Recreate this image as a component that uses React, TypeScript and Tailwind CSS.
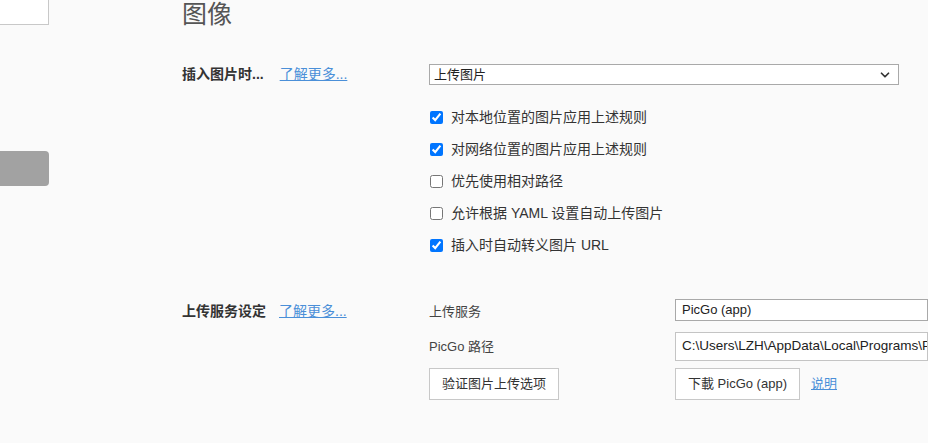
import { ChevronDown } from "lucide-react";

const rules = [
  { label: "对本地位置的图片应用上述规则", checked: true },
  { label: "对网络位置的图片应用上述规则", checked: true },
  { label: "优先使用相对路径", checked: false },
  { label: "允许根据 YAML 设置自动上传图片", checked: false },
  { label: "插入时自动转义图片 URL", checked: true },
];

const font = "font-['Liberation_Sans','Noto_Sans_CJK_SC',sans-serif]";

export default function App() {
  return (
    <div className={`w-[928px] h-[443px] overflow-hidden bg-[#fafafa] text-[#333] flex ${font}`}>
      {/* Sidebar remnants */}
      <div className="w-[49px] shrink-0 flex flex-col">
        <div className="h-[25px] border-r border-b border-[#c8c8c8] bg-white" />
        <div className="mt-[126px] h-[35px] rounded-r-[4px] bg-[#a2a2a2]" />
      </div>

      <div className="ml-[133px] flex-1 min-w-0">
        <h1 className="text-[25px] leading-[24px] text-[#555] font-['Noto_Sans_CJK_SC',sans-serif]">图像</h1>

        {/* Insert image section */}
        <div className="mt-[40px] flex">
          <div className="w-[247px] shrink-0 h-[21px] flex items-center text-[14px]">
            <span className="font-bold text-[#333]">插入图片时...</span>
            <a className="ml-[16px] text-[#4a8fd8] underline">了解更多...</a>
          </div>
          <div className="flex-1">
            <div className="w-[470px] h-[21px] bg-white border border-[#a9a9a9] flex items-center justify-between pl-[4px] pr-[6px] text-[13px] text-[#222]">
              <span>上传图片</span>
              <ChevronDown className="w-[14px] h-[14px] text-[#333]" strokeWidth={3} />
            </div>
            <div className="mt-[16px] flex flex-col">
              {rules.map((r) => (
                <label key={r.label} className="h-[32px] flex items-center text-[14px] text-[#333]">
                  <input
                    type="checkbox"
                    defaultChecked={r.checked}
                    className="w-[13px] h-[13px] m-0 ml-[1px] accent-[#0075ff]"
                  />
                  <span className="ml-[8px]">{r.label}</span>
                </label>
              ))}
            </div>
          </div>
        </div>

        {/* Upload service section */}
        <div className="mt-[38px] flex">
          <div className="w-[247px] shrink-0 h-[24px] flex items-center text-[14px]">
            <span className="font-bold text-[#333]">上传服务设定</span>
            <a className="ml-[13px] text-[#4a8fd8] underline">了解更多...</a>
          </div>
          <div className="flex-1 grid grid-cols-[246px_1fr] gap-y-[9px] text-[13px] text-[#444]">
            <div className="h-[22px] flex items-center mt-[2px]">上传服务</div>
            <div className="h-[22px] border border-[#a9a9a9] bg-white flex items-center px-[6px] text-[#222] whitespace-nowrap overflow-hidden">
              PicGo (app)
            </div>
            <div className="h-[29px] flex items-center">PicGo 路径</div>
            <div className="h-[29px] border border-[#c4c4c4] bg-white flex items-center px-[6px] text-[13.5px] text-[#222] whitespace-nowrap overflow-hidden">
              C:\Users\LZH\AppData\Local\Programs\PicGo\PicGo.exe
            </div>
            <div className="-mt-[2px]">
              <button className="w-[130px] h-[32px] border border-[#c8c8c8] bg-white text-[#333]">
                验证图片上传选项
              </button>
            </div>
            <div className="-mt-[2px] flex items-center">
              <button className="w-[125px] h-[32px] border border-[#c8c8c8] bg-white text-[#333]">
                下載 PicGo (app)
              </button>
              <a className="ml-[11px] text-[#4a8fd8] underline">说明</a>
            </div>
          </div>
        </div>
      </div>
    </div>
  );
}
